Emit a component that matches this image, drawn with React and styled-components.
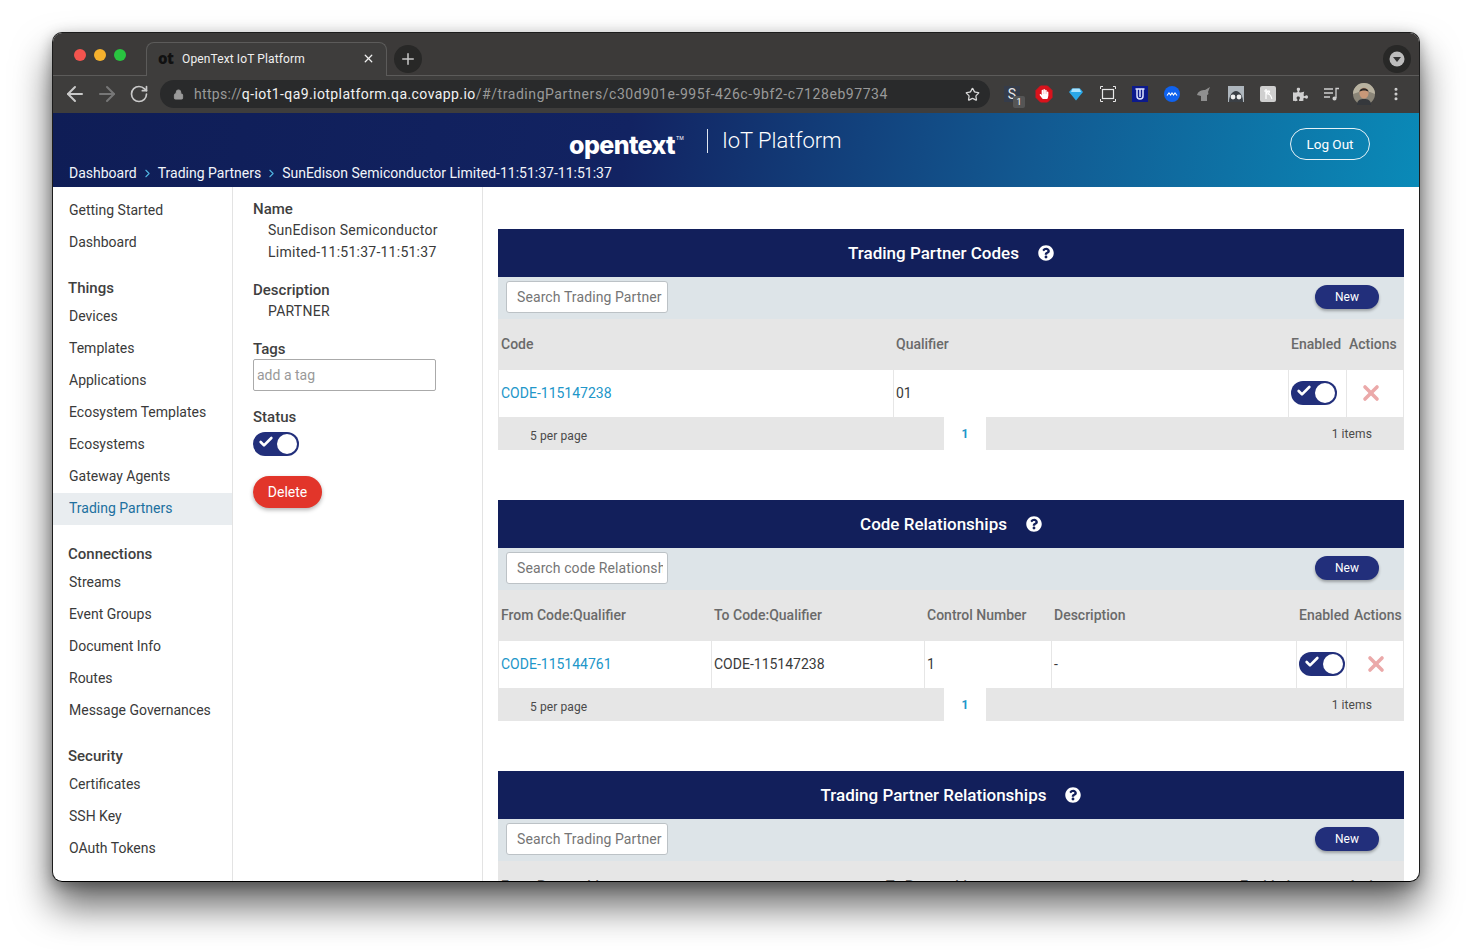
import React from "react";
import styled, { createGlobalStyle } from "styled-components";
import { ArrowLeft, ArrowRight, RotateCw, Lock, Star, Plus, X, Check, ChevronRight, EllipsisVertical } from "lucide-react";
import { FaQuestionCircle, FaPuzzlePiece, FaHandPaper } from "react-icons/fa";

const GlobalStyle = createGlobalStyle`
  html, body { margin: 0; padding: 0; background: #fff; }
  body { font-family: Roboto, "Liberation Sans", sans-serif; color: #333; }
  * { box-sizing: border-box; }
`;

const Page = styled.div`
  width: 1472px;
  height: 950px;
  padding: 32px 52px 68px;
  overflow: hidden;
`;

const Window = styled.div`
  height: 850px;
  display: flex;
  flex-direction: column;
  border: 1px solid #1c1c1c;
  border-bottom-color: #000;
  border-radius: 10px;
  overflow: hidden;
  background: #fff;
  box-shadow: 0 24px 38px rgba(0, 0, 0, 0.6), 0 4px 14px rgba(0, 0, 0, 0.3);
`;

const TabStrip = styled.div`
  height: 43px;
  flex: none;
  background: #3c3a39;
  border-bottom: 1px solid #5c5b5a;
  display: flex;
  align-items: flex-end;
  padding-left: 21px;
  padding-right: 8px;
`;

const Lights = styled.div`
  display: flex;
  gap: 8px;
  align-self: flex-start;
  margin-top: 16px;
  width: 72px;
`;

const Light = styled.span`
  width: 12px;
  height: 12px;
  border-radius: 50%;
  background: ${(p) => p.$color};
`;

const Tab = styled.div`
  width: 241px;
  height: 34px;
  margin-bottom: -1px;
  display: flex;
  align-items: center;
  padding: 0 11px 2px 11px;
  background: #3e3d3c;
  border: 1px solid #5c5b5a;
  border-bottom: 0;
  border-radius: 8px 8px 0 0;
  color: #f0f0f0;
  font-size: 12px;
  letter-spacing: 0.12px;
`;

const Favicon = styled.span`
  width: 24px;
  font: 800 15px/1 "Open Sans", sans-serif;
  letter-spacing: -0.5px;
  color: #111;
`;

const TabTitle = styled.span`
  flex: 1;
`;

const RoundButton = styled.div`
  width: 28px;
  height: 28px;
  border-radius: 50%;
  background: #282827;
  color: #c8c8c8;
  display: flex;
  align-items: center;
  justify-content: center;
  align-self: flex-start;
  margin-top: 12px;
`;

const NewTab = styled(RoundButton)`
  margin-left: 7px;
`;

const ProfileDot = styled(RoundButton)`
  margin-left: auto;
`;

const Toolbar = styled.div`
  height: 37px;
  flex: none;
  background: #3e3d3c;
  display: flex;
  align-items: center;
  padding: 0 7px 1px 10px;
  color: #c9c9c9;
`;

const NavIcons = styled.div`
  display: flex;
  align-items: center;
  gap: 8px;
  width: 98px;
  svg:last-child { margin-left: 2px; }
`;

const UrlBar = styled.div`
  width: 830px;
  height: 28px;
  flex: none;
  border-radius: 14px;
  background: #292a2b;
  display: flex;
  align-items: center;
  padding: 0 10px 0 13px;
  font: 14px/1 Roboto, sans-serif;
  letter-spacing: 0.56px;
  color: #9a9a9a;
`;

const UrlText = styled.span`
  margin-left: 10px;
  flex: 1;
  white-space: nowrap;
`;

const UrlScheme = styled.span`
  letter-spacing: 0.3px;
`;

const UrlHost = styled.span`
  letter-spacing: 0.42px;
  color: #f2f2f2;
`;

const Extensions = styled.div`
  display: flex;
  margin-left: 6px;
`;

const Ext = styled.div`
  position: relative;
  width: 32px;
  height: 28px;
  display: flex;
  align-items: center;
  justify-content: center;
`;

const ExtBadge = styled.span`
  position: absolute;
  right: 3px;
  bottom: 0;
  width: 12px;
  height: 12px;
  background: #555;
  border-radius: 2px;
  color: #fff;
  font-size: 9px;
  line-height: 12px;
  text-align: center;
`;

const HandIcon = styled(FaHandPaper)`
  position: absolute;
  color: #fff;
`;

const Header = styled.header`
  height: 74px;
  flex: none;
  background: linear-gradient(100deg, #0f1d56 0%, #122362 42%, #125a92 72%, #0a8ab8 100%);
  padding: 15px 49px 0 16px;
  color: #fff;
`;

const HeaderTop = styled.div`
  display: flex;
  justify-content: space-between;
  align-items: flex-start;
  padding-left: 500px;
  height: 35px;
`;

const Brand = styled.div`
  display: flex;
  align-items: center;
  height: 26px;
`;

const Logo = styled.span`
  width: 122px;
  font: 800 25px/26px Inter, sans-serif;
  letter-spacing: -0.6px;
  white-space: nowrap;
  sup { font-size: 5px; font-weight: 400; vertical-align: 14px; margin-left: 1px; letter-spacing: 0; }
`;

const BrandDivider = styled.span`
  width: 1px;
  height: 24px;
  margin: 0 14px 0 16px;
  background: #dfe6f0;
`;

const Product = styled.span`
  font: 300 22px/26px Roboto, sans-serif;
  letter-spacing: -0.05px;
`;

const LogOut = styled.button`
  width: 80px;
  height: 32px;
  border: 1px solid #e6f2f7;
  border-radius: 16px;
  background: transparent;
  color: #fff;
  font: 13.5px Roboto, sans-serif;
`;

const Crumbs = styled.nav`
  display: flex;
  align-items: center;
  height: 20px;
  font-size: 14px;
  color: #f2f5fa;
  svg { color: #4fb3e0; margin: 0 4px; }
`;

const Body = styled.div`
  flex: 1;
  min-height: 0;
  display: flex;
`;

const Sidebar = styled.aside`
  width: 180px;
  flex: none;
  border-right: 1px solid #e3e3e3;
  padding-top: 8px;
`;

const NavGroup = styled.div`
  margin-bottom: 18px;
`;

const NavHeading = styled.div`
  height: 24px;
  padding-left: 15px;
  font-size: 15px;
  font-weight: 500;
  line-height: 22px;
  color: #3f3f3f;
`;

const NavItem = styled.div`
  height: 32px;
  padding-left: 16px;
  font-size: 14px;
  line-height: 30px;
  color: ${(p) => (p.$active ? "#20709f" : "#3a3a3a")};
  background: ${(p) => (p.$active ? "#e9edf0" : "transparent")};
`;

const Details = styled.div`
  width: 250px;
  flex: none;
  border-right: 1px solid #e3e3e3;
  padding: 12px 0 0 20px;
`;

const FieldLabel = styled.div`
  height: 20px;
  margin-top: ${(p) => p.$top || 0}px;
  font-size: 15px;
  font-weight: 500;
  line-height: 20px;
  color: #3f3f3f;
`;

const FieldValue = styled.div`
  width: 195px;
  padding-left: 15px;
  font-size: 14px;
  line-height: 22px;
  letter-spacing: 0.25px;
  color: #3a3a3a;
`;

const TagInput = styled.input`
  display: block;
  width: 183px;
  height: 32px;
  padding: 0 3px;
  border: 1px solid #aaa;
  border-radius: 2px;
  font: 14px Roboto, sans-serif;
  &::placeholder { color: #999; opacity: 1; }
`;

const Track = styled.div`
  position: relative;
  width: 46px;
  height: 24px;
  border-radius: 12px;
  background: #222f7b;
  color: #fff;
  display: flex;
  align-items: flex-start;
  padding: 2px 0 0 5px;
  margin-top: ${(p) => p.$top || 0}px;
`;

const Knob = styled.span`
  position: absolute;
  right: 2px;
  top: 2px;
  width: 20px;
  height: 20px;
  border-radius: 50%;
  background: #fff;
`;

const DeleteButton = styled.button`
  display: block;
  width: 69px;
  height: 32px;
  margin-top: 20px;
  border: 0;
  border-radius: 16px;
  background: #e2352a;
  color: #fff;
  font: 14px Roboto, sans-serif;
  box-shadow: 0 2px 4px rgba(0, 0, 0, 0.3);
`;

const Main = styled.main`
  flex: 1;
  min-width: 0;
  padding: 42px 15px 0;
  overflow: hidden;
`;

const Section = styled.section`
  margin-bottom: 50px;
`;

const SectionTitle = styled.div`
  height: 48px;
  background: #121f5b;
  color: #fff;
  display: flex;
  align-items: center;
  justify-content: center;
  gap: 19px;
  font-size: 17px;
  font-weight: 500;
`;

const SectionBar = styled.div`
  height: 42px;
  background: #dde4e8;
  display: flex;
  align-items: center;
  justify-content: space-between;
  padding: 0 25px 2px 8px;
`;

const SearchInput = styled.input`
  width: 162px;
  height: 32px;
  padding: 0 4px 0 10px;
  border: 1px solid #bcc2c6;
  border-radius: 3px;
  background: #fff;
  font: 14px Roboto, sans-serif;
  letter-spacing: 0.1px;
  &::placeholder { color: #757575; opacity: 1; }
`;

const NewButton = styled.button`
  width: 64px;
  height: 24px;
  border: 0;
  border-radius: 12px;
  background: #222f7b;
  color: #fff;
  font: 12px Roboto, sans-serif;
  box-shadow: 0 2px 3px rgba(0, 0, 0, 0.3);
`;

const HeadRow = styled.div`
  height: 51px;
  display: grid;
  grid-template-columns: ${(p) => p.$cols};
  align-items: center;
  padding-bottom: 2px;
  background: #e6e6e6;
  font-size: 14px;
  font-weight: 500;
  color: #6a6a6a;
`;

const HeadCell = styled.div`
  padding-left: 3px;
  white-space: nowrap;
`;

const DataRow = styled.div`
  height: 47px;
  display: grid;
  grid-template-columns: ${(p) => p.$cols};
  border-right: 1px solid #e6e6e6;
  font-size: 14px;
`;

const DataCell = styled.div`
  display: flex;
  align-items: center;
  padding: 0 0 2px ${(p) => p.$inset ?? 2}px;
  border-left: 1px solid #e6e6e6;
  color: #3a3a3a;
`;

const CodeLink = styled.a`
  color: #2196c9;
  text-decoration: none;
`;

const RemoveIcon = styled(X)`
  color: #eba9a9;
`;

const Pager = styled.div`
  height: 33px;
  display: grid;
  grid-template-columns: 446px 42px 1fr;
  font-size: 12px;
  letter-spacing: 0.1px;
  color: #4a4a4a;
`;

const PerPage = styled.div`
  background: #e6e6e6;
  padding: 12px 0 0 32px;
  line-height: 14px;
`;

const PageNumber = styled.div`
  padding-top: 10px;
  line-height: 14px;
  text-align: center;
  font-size: 12px;
  font-weight: 700;
  color: #2196c9;
`;

const ItemCount = styled.div`
  background: #e6e6e6;
  padding: 10px 32px 0 0;
  line-height: 14px;
  text-align: right;
`;

const Toggle = ({ top }) => (
  <Track $top={top}>
    <Check size={16} strokeWidth={4} />
    <Knob />
  </Track>
);

const nav = [
  { items: ["Getting Started", "Dashboard"] },
  { title: "Things", items: ["Devices", "Templates", "Applications", "Ecosystem Templates", "Ecosystems", "Gateway Agents", "Trading Partners"] },
  { title: "Connections", items: ["Streams", "Event Groups", "Document Info", "Routes", "Message Governances"] },
  { title: "Security", items: ["Certificates", "SSH Key", "OAuth Tokens"] },
];

const sections = [
  {
    title: "Trading Partner Codes",
    search: "Search Trading Partner",
    cols: "395px 395px 58px 58px",
    headCols: "395px 395px 58px 58px",
    head: ["Code", "Qualifier", "Enabled", "Actions"],
    row: ["CODE-115147238", "01"],
    removeInset: 12,
  },
  {
    title: "Code Relationships",
    search: "Search code Relationship",
    cols: "213px 213px 127px 245px 50px 58px",
    headCols: "213px 213px 127px 245px 55px 53px",
    head: ["From Code:Qualifier", "To Code:Qualifier", "Control Number", "Description", "Enabled", "Actions"],
    row: ["CODE-115144761", "CODE-115147238", "1", "-"],
    removeInset: 17,
  },
  {
    title: "Trading Partner Relationships",
    search: "Search Trading Partner",
    headCols: "385px 354px 108px 59px",
    head: ["From Partner Id", "To Partner Id", "Enabled", "Actions"],
  },
];

const SectionBlock = ({ section }) => (
  <Section>
    <SectionTitle>
      {section.title}
      <FaQuestionCircle size={16} />
    </SectionTitle>
    <SectionBar>
      <SearchInput placeholder={section.search} />
      <NewButton>New</NewButton>
    </SectionBar>
    <HeadRow $cols={section.headCols}>
      {section.head.map((h) => (
        <HeadCell key={h}>{h}</HeadCell>
      ))}
    </HeadRow>
    {section.row && (
      <>
        <DataRow $cols={section.cols}>
          {section.row.map((cell, i) => (
            <DataCell key={cell}>{i === 0 ? <CodeLink href="#">{cell}</CodeLink> : cell}</DataCell>
          ))}
          <DataCell>
            <Toggle />
          </DataCell>
          <DataCell $inset={section.removeInset}>
            <RemoveIcon size={24} strokeWidth={3.6} />
          </DataCell>
        </DataRow>
        <Pager>
          <PerPage>5 per page</PerPage>
          <PageNumber>1</PageNumber>
          <ItemCount>1 items</ItemCount>
        </Pager>
      </>
    )}
  </Section>
);

const ExtensionIcons = () => (
  <Extensions>
    <Ext>
      <svg width="16" height="16" viewBox="0 0 16 16">
        <rect width="16" height="16" fill="#353c4a" />
        <text x="8" y="13" fontSize="14" fontFamily="Roboto" fill="#e8e8e8" textAnchor="middle">S</text>
      </svg>
      <ExtBadge>1</ExtBadge>
    </Ext>
    <Ext>
      <svg width="18" height="18" viewBox="0 0 18 18">
        <path d="M5.500 1h7L17 5.500v7L12.500 17h-7L1 12.500v-7z" fill="#d9131c" stroke="#d9131c" strokeLinejoin="round" />
      </svg>
      <HandIcon size={10} />
    </Ext>
    <Ext>
      <svg width="14" height="14" viewBox="0 0 14 14">
        <path d="M3 1.500h8L14 5l-7 8.500L0 5z" fill="#2aa8e8" />
        <path d="M3.500 1.500h7L12 5H2z" fill="#a9e3ff" />
      </svg>
    </Ext>
    <Ext>
      <svg width="16" height="16" viewBox="0 0 16 16" fill="none" stroke="#e8e8e8">
        <rect x="2.500" y="3.500" width="11" height="9" strokeWidth="1.200" />
        <path d="M0.500 3V.5H3M13 .5h2.500V3M15.500 13v2.500H13M3 15.500H.5V13" strokeWidth="1" />
      </svg>
    </Ext>
    <Ext>
      <svg width="16" height="16" viewBox="0 0 16 16">
        <rect width="16" height="16" fill="#0c1a8c" />
        <path d="M5 3v7a3 3 0 0 0 6 0V3M3.500 3h9M8 3v8" fill="none" stroke="#dfe4ff" strokeWidth="1.500" />
      </svg>
    </Ext>
    <Ext>
      <svg width="16" height="16" viewBox="0 0 16 16">
        <circle cx="8" cy="8" r="8" fill="#0f62ee" />
        <path d="M3 9.500l2-2.500 1.600 2L8 7l1.500 2L11 7l2 2.500" fill="none" stroke="#fff" strokeWidth="1.100" />
      </svg>
    </Ext>
    <Ext>
      <svg width="16" height="16" viewBox="0 0 16 16">
        <path d="M1 9c1-4 5-5 8-5l5-3-2 5c1 2 0 3-1 3v6H5V10z" fill="#8f8f8f" />
      </svg>
    </Ext>
    <Ext>
      <svg width="16" height="16" viewBox="0 0 16 16">
        <rect width="16" height="16" fill="#aeb6bd" />
        <path d="M1 16c0-6 3-11 7-11s7 5 7 11z" fill="#3b4046" />
        <circle cx="5" cy="11" r="2.400" fill="#eee" />
        <circle cx="11" cy="11" r="2.400" fill="#eee" />
      </svg>
    </Ext>
    <Ext>
      <svg width="16" height="16" viewBox="0 0 16 16">
        <rect width="16" height="16" rx="2" fill="#cfcfcf" />
        <path d="M6 3v10M6 8c3-5 5-3 2 0 3 0 3 3 4 5M4 5h5" fill="none" stroke="#fff" strokeWidth="1.200" />
      </svg>
    </Ext>
    <Ext>
      <FaPuzzlePiece size={15} color="#d0d0d0" />
    </Ext>
    <Ext>
      <svg width="16" height="16" viewBox="0 0 16 16" fill="none" stroke="#d0d0d0" strokeWidth="1.300">
        <path d="M0 3h9M0 7h9M0 11h6M15 2.500h-3V12" />
        <circle cx="10.500" cy="12.500" r="1.400" fill="#d0d0d0" />
      </svg>
    </Ext>
    <Ext>
      <svg width="22" height="22" viewBox="0 0 22 22">
        <circle cx="11" cy="11" r="11" fill="#8a8578" />
        <path d="M0 11a11 11 0 0 1 22 0l-5-2H6z" fill="#b8b2a0" />
        <ellipse cx="11" cy="10" rx="4.600" ry="5.600" fill="#c89878" />
        <path d="M6.400 9c0-5 9-5 9.200 0-2-2-7-2-9.200 0z" fill="#2d2a28" />
        <path d="M4 22c0-5 3-6 7-6s7 1 7 6z" fill="#35383c" />
      </svg>
    </Ext>
    <Ext>
      <EllipsisVertical size={16} color="#d0d0d0" strokeWidth={2.6} />
    </Ext>
  </Extensions>
);

const App = () => (
  <Page>
    <GlobalStyle />
    <Window>
      <TabStrip>
        <Lights>
          <Light $color="#f4544e" />
          <Light $color="#f5b12d" />
          <Light $color="#29c440" />
        </Lights>
        <Tab>
          <Favicon>ot</Favicon>
          <TabTitle>OpenText IoT Platform</TabTitle>
          <X size={13} strokeWidth={2.4} />
        </Tab>
        <NewTab>
          <Plus size={18} strokeWidth={2} />
        </NewTab>
        <ProfileDot>
          <svg width="16" height="16" viewBox="0 0 16 16">
            <circle cx="8" cy="8" r="7.500" fill="#bdbdbd" />
            <path d="M4 6h8l-4 5z" fill="#333" />
          </svg>
        </ProfileDot>
      </TabStrip>
      <Toolbar>
        <NavIcons>
          <ArrowLeft size={24} />
          <ArrowRight size={24} color="#777" />
          <RotateCw size={20} />
        </NavIcons>
        <UrlBar>
          <Lock size={11} fill="#9a9a9a" />
          <UrlText>
            <UrlScheme>https://</UrlScheme>
            <UrlHost>q-iot1-qa9.iotplatform.qa.covapp.io</UrlHost>
            /#/tradingPartners/c30d901e-995f-426c-9bf2-c7128eb97734
          </UrlText>
          <Star size={15} color="#d8d8d8" />
        </UrlBar>
        <ExtensionIcons />
      </Toolbar>
      <Header>
        <HeaderTop>
          <Brand>
            <Logo>opentext<sup>TM</sup></Logo>
            <BrandDivider />
            <Product>IoT Platform</Product>
          </Brand>
          <LogOut>Log Out</LogOut>
        </HeaderTop>
        <Crumbs>
          Dashboard
          <ChevronRight size={13} />
          Trading Partners
          <ChevronRight size={13} />
          SunEdison Semiconductor Limited-11:51:37-11:51:37
        </Crumbs>
      </Header>
      <Body>
        <Sidebar>
          {nav.map((group, i) => (
            <NavGroup key={i}>
              {group.title && <NavHeading>{group.title}</NavHeading>}
              {group.items.map((item) => (
                <NavItem key={item} $active={item === "Trading Partners"}>{item}</NavItem>
              ))}
            </NavGroup>
          ))}
        </Sidebar>
        <Details>
          <FieldLabel>Name</FieldLabel>
          <FieldValue>SunEdison Semiconductor Limited-11:51:37-11:51:37</FieldValue>
          <FieldLabel $top={17}>Description</FieldLabel>
          <FieldValue>PARTNER</FieldValue>
          <FieldLabel $top={17}>Tags</FieldLabel>
          <TagInput placeholder="add a tag" />
          <FieldLabel $top={16}>Status</FieldLabel>
          <Toggle top={5} />
          <DeleteButton>Delete</DeleteButton>
        </Details>
        <Main>
          {sections.map((section) => (
            <SectionBlock key={section.title} section={section} />
          ))}
        </Main>
      </Body>
    </Window>
  </Page>
);

export default App;
